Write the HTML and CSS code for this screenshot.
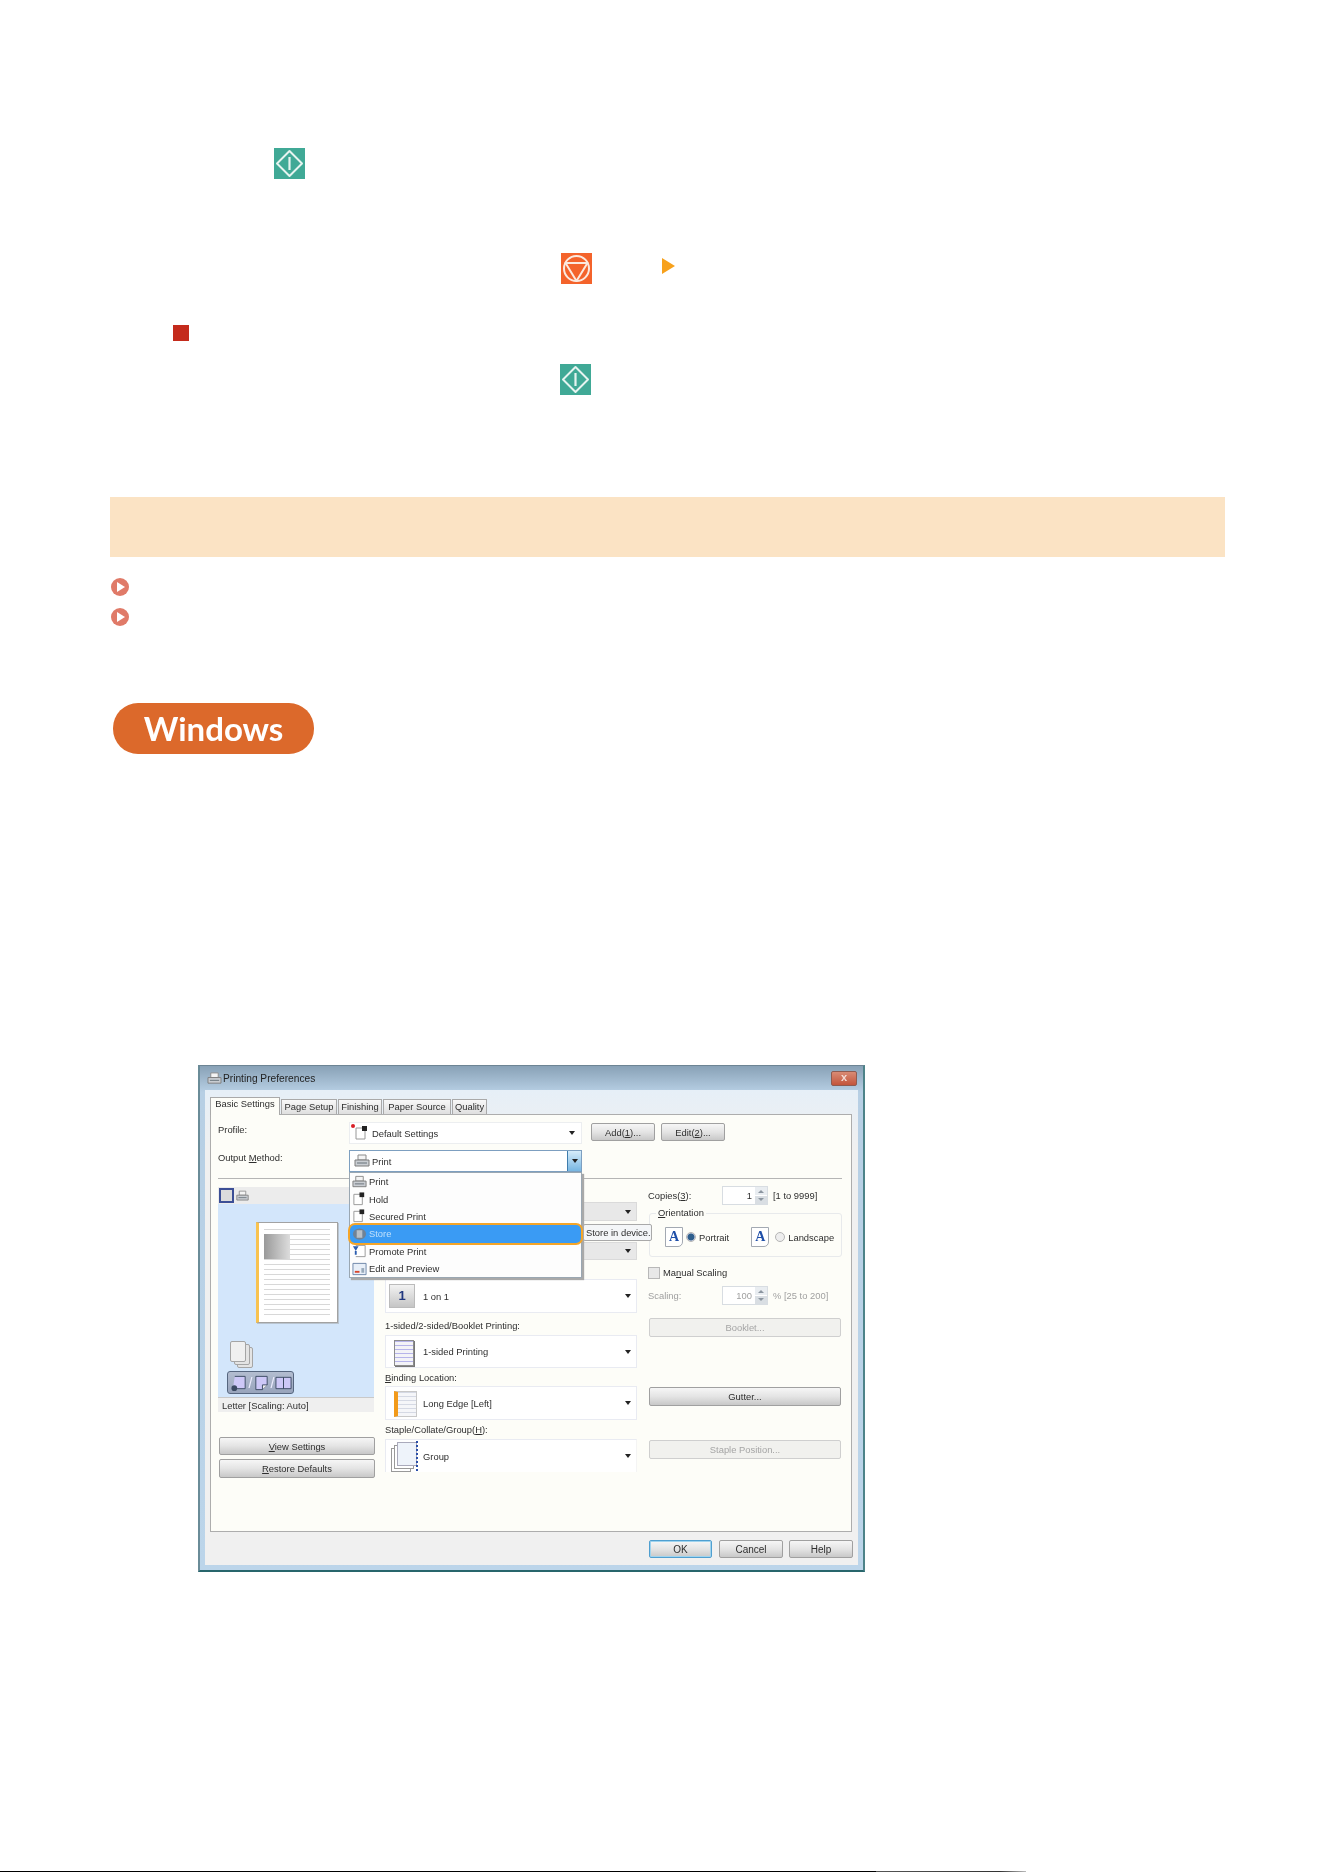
FILE: index.html
```html
<!DOCTYPE html>
<html lang="en">
<head>
    <meta charset="UTF-8">
    <meta name="viewport" content="width=device-width, initial-scale=1.0">
    <title>Printing Preferences</title>
    <link rel="stylesheet" href="styles.css">
</head>
<body>
    <svg class="defs" width="0" height="0">
        <symbol id="key-start" viewBox="0 0 31 31">
            <rect width="31" height="31" fill="#40a996"/>
            <path d="M15.5 3 L28 15.5 L15.5 28 L3 15.5 Z" fill="none" stroke="#e6f4f0" stroke-width="2" stroke-linejoin="round"/>
            <path d="M15.5 9 V22" stroke="#e6f4f0" stroke-width="2.2"/>
        </symbol>
        <symbol id="key-stop" viewBox="0 0 31 31">
            <rect width="31" height="31" fill="#f4632b"/>
            <circle cx="15.5" cy="15.5" r="12.5" fill="none" stroke="#fbe9df" stroke-width="2"/>
            <path d="M4.5 10 H26.5 L15.5 28 Z" fill="none" stroke="#fbe9df" stroke-width="2" stroke-linejoin="round"/>
        </symbol>
        <symbol id="link-arrow" viewBox="0 0 18 18">
            <circle cx="9" cy="9" r="9" fill="#e07a68"/>
            <path d="M6 4 L14 9 L6 14 Z" fill="#fff"/>
        </symbol>
        <symbol id="ico-printer" viewBox="0 0 16 14">
            <path d="M4 1 H12 V6 H4 Z" fill="#f4f4f4" stroke="#8a8a8a"/>
            <path d="M1 6 H15 V12 H1 Z" fill="#c9cdd2" stroke="#7c7c7c"/>
            <path d="M3 9 H13" stroke="#667079"/>
        </symbol>
        <symbol id="ico-page" viewBox="0 0 16 14">
            <path d="M2 2 H11 V13 H2 Z" fill="#fff" stroke="#989898"/>
            <rect x="8" y="0" width="5" height="5" fill="#222"/>
        </symbol>
        <symbol id="ico-store" viewBox="0 0 16 14">
            <ellipse cx="8" cy="7" rx="7" ry="6" fill="#6f8296"/>
            <path d="M5 3 H11 V11 H5 Z" fill="#b9bfc6"/>
        </symbol>
        <symbol id="ico-promote" viewBox="0 0 16 14">
            <path d="M4 1 H14 V13 H4" fill="#fff" stroke="#989898"/>
            <path d="M1 2 H7 L4 7 Z M3 7 H5 V11 H3 Z" fill="#2a5db0"/>
        </symbol>
        <symbol id="ico-edit" viewBox="0 0 16 14">
            <path d="M1 1 H15 V13 H1 Z" fill="#e8eff8" stroke="#6b84a8"/>
            <path d="M3 9 H8 V11 H3 Z" fill="#d8452c"/>
            <path d="M10 6 H13 V11 H10 Z" fill="#9ab"/>
        </symbol>
        <symbol id="tray-portrait" viewBox="0 0 18 18">
            <path d="M4 2 H15 V15 H2" fill="#cdc8f7" stroke="#3b4a63"/>
            <circle cx="3.5" cy="14.5" r="3" fill="#3b4a63"/>
        </symbol>
        <symbol id="tray-fold" viewBox="0 0 18 18">
            <path d="M3 2 H15 V11 L10 16 H3 Z" fill="#cdc8f7" stroke="#3b4a63"/>
            <path d="M10 16 V11 H15" fill="#eee" stroke="#3b4a63"/>
        </symbol>
        <symbol id="tray-book" viewBox="0 0 18 18">
            <path d="M1 3 H9 V15 H1 Z M9 3 H17 V15 H9 Z" fill="#cdc8f7" stroke="#3b4a63"/>
        </symbol>
    </svg>

    <div class="doc">
        <div class="key-row key-row-first">
            <svg class="key"><use href="#key-start"/></svg>
        </div>
        <div class="key-row key-row-stop">
            <svg class="key"><use href="#key-stop"/></svg>
            <span class="tri"></span>
        </div>
        <div class="red-mark"></div>
        <div class="key-row key-row-again">
            <svg class="key"><use href="#key-start"/></svg>
        </div>

        <div class="banner"></div>

        <ul class="links">
            <li><svg class="link-ico"><use href="#link-arrow"/></svg></li>
            <li><svg class="link-ico"><use href="#link-arrow"/></svg></li>
        </ul>

        <div class="pill">Windows</div>

        <div class="win">
            <div class="win-title">
                <svg class="win-ico"><use href="#ico-printer"/></svg>
                <span class="win-name">Printing Preferences</span>
                <span class="win-close">x</span>
            </div>
            <div class="client">
                <div class="tabs">
                    <span class="tab tab-on">Basic Settings</span>
                    <span class="tab tab-page">Page Setup</span>
                    <span class="tab tab-finish">Finishing</span>
                    <span class="tab tab-source">Paper Source</span>
                    <span class="tab tab-quality">Quality</span>
                </div>

                <div class="panel">
                    <div class="top-row">
                        <span class="top-label">Profile:</span>
                        <div class="combo combo-plain">
                            <i class="star"></i>
                            <svg class="combo-ico"><use href="#ico-page"/></svg>
                            <span>Default Settings</span>
                            <b class="arrow"></b>
                        </div>
                        <button class="btn btn-top">Add(<u>1</u>)...</button>
                        <button class="btn btn-top">Edit(<u>2</u>)...</button>
                    </div>
                    <div class="top-row">
                        <span class="top-label">Output <u>M</u>ethod:</span>
                        <div class="combo combo-open">
                            <svg class="combo-ico"><use href="#ico-printer"/></svg>
                            <span>Print</span>
                            <b class="combo-drop"><b class="arrow"></b></b>
                        </div>
                    </div>
                    <hr class="rule">

                    <div class="cols">
                        <div class="col-left">
                            <div class="view-bar">
                                <span class="view-page"></span>
                                <svg class="view-printer"><use href="#ico-printer"/></svg>
                            </div>
                            <div class="preview">
                                <div class="paper">
                                    <div class="paper-pic"></div>
                                </div>
                                <div class="stack">
                                    <i></i><i></i><i></i>
                                </div>
                                <div class="tray">
                                    <svg><use href="#tray-portrait"/></svg>
                                    <em>/</em>
                                    <svg><use href="#tray-fold"/></svg>
                                    <em>/</em>
                                    <svg><use href="#tray-book"/></svg>
                                </div>
                            </div>
                            <div class="status">Letter [Scaling: Auto]</div>
                            <button class="btn btn-wide btn-view"><u>V</u>iew Settings</button>
                            <button class="btn btn-wide btn-restore"><u>R</u>estore Defaults</button>
                        </div>

                        <div class="col-mid">
                            <div class="sel sel-hidden sel-a"><b class="arrow"></b></div>
                            <div class="sel sel-hidden sel-b"><b class="arrow"></b></div>
                            <div class="sel sel-tall sel-layout">
                                <span class="tile tile-layout">1</span>
                                <span>1 on 1</span>
                                <b class="arrow"></b>
                            </div>
                            <div class="mid-label mid-label-sided">1-sided/2-sided/Booklet Printing:</div>
                            <div class="sel sel-tall sel-sided">
                                <span class="tile tile-sided"></span>
                                <span>1-sided Printing</span>
                                <b class="arrow"></b>
                            </div>
                            <div class="mid-label mid-label-bind"><u>B</u>inding Location:</div>
                            <div class="sel sel-tall">
                                <span class="tile tile-bind"></span>
                                <span>Long Edge [Left]</span>
                                <b class="arrow"></b>
                            </div>
                            <div class="mid-label mid-label-staple">Staple/Collate/Group(<u>H</u>):</div>
                            <div class="sel sel-tall sel-last">
                                <span class="tile tile-group"></span>
                                <span>Group</span>
                                <b class="arrow"></b>
                            </div>
                        </div>

                        <div class="col-right">
                            <div class="spin-row">
                                <span class="spin-label">Copies(<u>3</u>):</span>
                                <div class="spin"><span class="spin-val">1</span><span class="spin-btns"></span></div>
                                <span class="spin-note">[1 to 9999]</span>
                            </div>
                            <div class="orient">
                                <span class="orient-legend"><u>O</u>rientation</span>
                                <span class="orient-ico">A</span>
                                <i class="radio radio-on"></i>
                                <span class="orient-text">Portrait</span>
                                <span class="orient-ico orient-ico-land">A</span>
                                <i class="radio"></i>
                                <span class="orient-text">Landscape</span>
                            </div>
                            <div class="check-row">
                                <i class="check"></i>
                                <span>Ma<u>n</u>ual Scaling</span>
                            </div>
                            <div class="spin-row spin-row-off">
                                <span class="spin-label">Scaling:</span>
                                <div class="spin"><span class="spin-val">100</span><span class="spin-btns"></span></div>
                                <span class="spin-note">% [25 to 200]</span>
                            </div>
                            <button class="btn btn-side btn-off btn-booklet">Booklet...</button>
                            <button class="btn btn-side btn-gutter">Gutter...</button>
                            <button class="btn btn-side btn-off btn-staple">Staple Position...</button>
                        </div>
                    </div>

                    <div class="dropdown">
                        <div class="drop-item"><svg class="drop-ico"><use href="#ico-printer"/></svg>Print</div>
                        <div class="drop-item"><svg class="drop-ico"><use href="#ico-page"/></svg>Hold</div>
                        <div class="drop-item"><svg class="drop-ico"><use href="#ico-page"/></svg>Secured Print</div>
                        <div class="drop-item drop-item-on"><svg class="drop-ico"><use href="#ico-store"/></svg>Store</div>
                        <div class="drop-item"><svg class="drop-ico"><use href="#ico-promote"/></svg>Promote Print</div>
                        <div class="drop-item"><svg class="drop-ico"><use href="#ico-edit"/></svg>Edit and Preview</div>
                    </div>
                    <div class="tooltip">Store in device.</div>
                </div>

                <div class="win-foot">
                    <button class="btn btn-foot btn-ok">OK</button>
                    <button class="btn btn-foot">Cancel</button>
                    <button class="btn btn-foot">Help</button>
                </div>
            </div>
        </div>

        <div class="cut-line"></div>
    </div>
</body>
</html>
```

FILE: styles.css
```css
* { box-sizing: border-box; }
body {
    margin: 0;
    background: #fff;
    font-family: "Liberation Sans", Arial, sans-serif;
    color: #2e2e2e;
}
.defs { position: absolute; }
.doc {
    height: 1872px;
    overflow: hidden;
    padding-top: 148px;
}

/* keys that stand in the text */
.key-row { display: flex; align-items: center; height: 31px; }
.key { width: 31px; height: 31px; display: block; filter: blur(.35px); }
.key-row-first { padding-left: 274px; }
.key-row-stop { margin-top: 74px; padding-left: 561px; }
.key-row-again { margin-top: 23px; padding-left: 560px; }
.tri {
    margin-left: 70px;
    margin-top: -6px;
    width: 0;
    height: 0;
    border-left: 13px solid #f7a11c;
    border-top: 8px solid transparent;
    border-bottom: 8px solid transparent;
}
.red-mark {
    width: 16px;
    height: 16px;
    margin: 41px 0 0 173px;
    background: #c42b1c;
}

.banner {
    height: 60px;
    margin: 102px 99px 0 110px;
    background: #fbe3c4;
}
.links { list-style: none; margin: 21px 0 0 111px; padding: 0; }
.links li { height: 18px; margin-bottom: 12px; }
.links li:last-child { margin-bottom: 0; }
.link-ico { width: 18px; height: 18px; display: block; }

.pill {
    width: 201px;
    height: 51px;
    margin: 77px 0 0 113px;
    border-radius: 25px;
    background: #dc692b;
    color: #fff;
    font-family: Lato, sans-serif;
    font-weight: 700;
    font-size: 33px;
    line-height: 50px;
    text-align: center;
    filter: blur(.35px);
}

/* dialog */
.win {
    width: 667px;
    height: 507px;
    margin: 311px 0 0 198px;
    display: flex;
    flex-direction: column;
    background: linear-gradient(#88a1b6, #b7cfe4 26px, #bcd5ea);
    border-top: 1px solid #6d8494;
    border-left: 2px solid #6a8c98;
    border-right: 2px solid #4d8389;
    border-bottom: 2px solid #28666c;
    font-size: 9.4px;
    filter: blur(.5px);
}
.win-title {
    height: 24px;
    display: flex;
    align-items: center;
    padding: 0 6px 0 7px;
    flex: none;
}
.win-ico { width: 15px; height: 13px; }
.win-name { margin-left: 1px; color: #222; font-size: 10.2px; }
.win-close {
    margin-left: auto;
    width: 26px;
    height: 15px;
    border-radius: 2px;
    background: linear-gradient(#d98b74, #c3553c);
    border: 1px solid #8f5b50;
    color: #f3dcd6;
    font-weight: bold;
    font-size: 11px;
    line-height: 11px;
    text-align: center;
}
.client {
    flex: 1;
    margin: 0 5px 5px;
    padding: 7px 6px 0 5px;
    background: linear-gradient(#e6eff7, #f0f0f0 60px);
}
.tabs { display: flex; height: 17px; align-items: flex-end; }
.tab {
    height: 15px;
    margin-right: 1px;
    border: 1px solid #a9a9a9;
    border-bottom: 0;
    background: linear-gradient(#f8f8f8, #dfdfdf);
    line-height: 14px;
    text-align: center;
}
.tab-on { width: 70px; height: 18px; margin-bottom: -1px; line-height: 12px; background: #fdfdf8; position: relative; z-index: 1; }
.tab-page { width: 56px; }
.tab-finish { width: 44px; }
.tab-source { width: 68px; }
.tab-quality { width: 35px; }

.panel {
    position: relative;
    height: 418px;
    padding: 7px 9px 0 7px;
    border: 1px solid #adadad;
    background: #fdfdf8;
}
.top-row { display: flex; align-items: flex-start; height: 22px; margin-bottom: 6px; }
.top-label { width: 131px; line-height: 16px; }
.combo {
    position: relative;
    width: 233px;
    height: 22px;
    display: flex;
    align-items: center;
    background: #fff;
}
.combo-plain { border: 1px solid #eceef0; }
.combo-open { border: 1px solid #7d9fc0; }
.combo-ico { width: 16px; height: 14px; margin: 0 2px 0 4px; }
.star {
    position: absolute;
    left: 1px;
    top: 1px;
    width: 4px;
    height: 4px;
    border-radius: 50%;
    background: #d81f26;
}
.arrow {
    position: absolute;
    right: 6px;
    top: 50%;
    margin-top: -2px;
    border-top: 4px solid #222;
    border-left: 3px solid transparent;
    border-right: 3px solid transparent;
}
.combo-drop {
    position: absolute;
    right: 0;
    top: 0;
    bottom: 0;
    width: 14px;
    background: linear-gradient(#d6ecfa, #77b6e2);
    border-left: 1px solid #3f7cac;
}
.combo-drop .arrow { right: 3px; }
.btn {
    display: block;
    padding: 0;
    border: 1px solid #a0a0a0;
    border-radius: 2px;
    background: linear-gradient(#f6f6f6, #e4e4e4 50%, #c8c8c8);
    font-family: inherit;
    font-size: 9.4px;
    color: #2e2e2e;
}
.btn-top { width: 64px; height: 18px; margin: 1px 0 0 9px; }
.btn-top + .btn-top { margin-left: 6px; }
.rule { margin: 1px 0 0; border: 0; border-top: 1px solid #b5b5b5; height: 1px; }

.cols { display: flex; gap: 11px; margin-top: 7px; }
.col-left { width: 156px; padding-top: 1px; }
.view-bar {
    height: 17px;
    display: flex;
    align-items: center;
    padding-left: 1px;
    background: #ececec;
}
.view-page {
    width: 15px;
    height: 15px;
    border: 2px solid #3c4f96;
    background: #dcdcdc;
}
.view-printer { width: 13px; height: 12px; margin-left: 2px; }
.preview {
    height: 193px;
    padding-top: 18px;
    background: #d3e6fb;
    overflow: hidden;
}
.paper {
    width: 82px;
    height: 101px;
    margin-left: 38px;
    padding: 6px 7px 0 5px;
    border: 1px solid #a2a2a2;
    border-left: 3px solid #f8c24f;
    background: #fff;
    box-shadow: 1px 1px 0 #b9c4cf;
}
.paper-pic {
    height: 88px;
    background: repeating-linear-gradient(#d8d8d8 0 1px, #fff 1px 5px);
}
.paper-pic::before {
    content: "";
    display: block;
    width: 26px;
    height: 25px;
    position: relative;
    top: 5px;
    background: linear-gradient(90deg, #999, #ddd);
}
.stack {
    position: relative;
    width: 23px;
    height: 27px;
    margin: 18px 0 0 12px;
}
.stack i {
    position: absolute;
    width: 16px;
    height: 21px;
    border: 1px solid #a5a5a5;
    border-radius: 2px;
    background: #e4e4e4;
}
.stack i:nth-child(1) { left: 7px; top: 6px; }
.stack i:nth-child(2) { left: 4px; top: 3px; }
.stack i:nth-child(3) { left: 0; top: 0; background: #f0f0f0; }
.tray {
    width: 67px;
    height: 23px;
    margin: 3px 0 0 9px;
    display: flex;
    align-items: center;
    padding-left: 3px;
    border: 1px solid #56667f;
    border-radius: 3px;
    background: linear-gradient(#b3bdd0, #98a4bc);
    color: #eef;
    font-size: 14px;
}
.tray svg { width: 17px; height: 18px; flex: none; }
.tray em { width: 5px; text-align: center; font-style: normal; }
.status {
    height: 15px;
    padding: 1px 0 0 4px;
    background: #efefef;
    border-top: 1px solid #c9c9c9;
    line-height: 14px;
}
.btn-wide { width: 156px; height: 18px; margin-left: 1px; }
.btn-view { margin-top: 25px; }
.btn-restore { margin-top: 4px; height: 19px; }

.col-mid { width: 252px; padding-top: 16px; }
.sel {
    position: relative;
    display: flex;
    align-items: center;
    border: 1px solid #e9ebf2;
    background: #fff;
}
.sel .arrow { right: 5px; }
.sel-hidden { background: #e8e8e8; border-color: #dadada; }
.sel-a { height: 19px; }
.sel-b { height: 18px; margin-top: 21px; }
.sel-tall { height: 34px; }
.sel-layout { margin-top: 19px; }
.sel-sided { height: 33px; }
.sel-last { height: 33px; border-bottom: 0; border-right-color: #f4f4f4; }
.tile {
    width: 26px;
    height: 24px;
    margin: 0 8px 0 3px;
    flex: none;
    position: relative;
}
.tile-layout {
    border: 1px solid #bbb;
    background: linear-gradient(#f2f2f2, #c5c5c5);
    color: #20377f;
    font-weight: bold;
    font-size: 13px;
    line-height: 22px;
    text-align: center;
}
.tile-sided::before {
    content: "";
    position: absolute;
    left: 5px;
    top: 0;
    width: 18px;
    height: 24px;
    border: 1px solid #8c8c8c;
    box-shadow: 1px 1px 0 #777;
    background: repeating-linear-gradient(#b6b4ea 0 1px, #f3f3f7 1px 4px);
}
.tile-bind::before {
    content: "";
    position: absolute;
    left: 5px;
    top: 0;
    width: 18px;
    height: 24px;
    border: 1px solid #c8c8c8;
    border-left: 4px solid #f29a1a;
    background: repeating-linear-gradient(#d5d9e4 0 1px, #f5f6f9 1px 4px);
}
.tile-group::before {
    content: "";
    position: absolute;
    left: 8px;
    top: -2px;
    width: 18px;
    height: 22px;
    border: 1px solid #aab;
    background: #eef3fa;
    box-shadow: -3px 3px 0 -1px #fff, -3px 3px 0 0 #999, -6px 6px 0 -1px #fff, -6px 6px 0 0 #999;
}
.tile-group::after {
    content: "";
    position: absolute;
    left: 27px;
    top: -3px;
    height: 30px;
    border-left: 2px dotted #2a4fa8;
}
.mid-label { line-height: 14px; }
.mid-label-sided { height: 22px; padding-top: 6px; }
.mid-label-bind { height: 18px; padding-top: 3px; }
.mid-label-staple { height: 19px; padding-top: 3px; }

.col-right { width: 194px; }
.spin-row { display: flex; align-items: center; height: 19px; }
.spin-label { width: 74px; }
.spin {
    width: 46px;
    height: 19px;
    display: flex;
    border: 1px solid #d8dde2;
    background: #fff;
}
.spin-val { flex: 1; text-align: right; padding-right: 3px; line-height: 17px; }
.spin-btns {
    position: relative;
    width: 12px;
    background: linear-gradient(#e9edf1 47%, #fff 47% 53%, #d9dee3 53%);
}
.spin-btns::before, .spin-btns::after {
    content: "";
    position: absolute;
    left: 3px;
    border-left: 3px solid transparent;
    border-right: 3px solid transparent;
}
.spin-btns::before { top: 3px; border-bottom: 3px solid #8b95a0; }
.spin-btns::after { bottom: 3px; border-top: 3px solid #8b95a0; }
.spin-note { margin-left: 5px; }
.spin-row-off { margin-top: 7px; color: #a0a0a0; }
.orient {
    position: relative;
    display: flex;
    align-items: center;
    width: 193px;
    height: 44px;
    margin: 8px 0 0 1px;
    padding: 4px 0 0 15px;
    border: 1px solid #e8eaec;
    border-radius: 3px;
}
.orient-legend {
    position: absolute;
    left: 6px;
    top: -7px;
    padding: 0 2px;
    background: #fdfdf8;
    line-height: 12px;
}
.orient-ico {
    width: 18px;
    height: 20px;
    margin-right: 3px;
    border: 1px solid #a3a9b2;
    border-bottom-right-radius: 5px;
    background: #fff;
    color: #1f4fa8;
    font-family: "Liberation Serif", serif;
    font-weight: bold;
    font-size: 14px;
    line-height: 18px;
    text-align: center;
}
.orient-ico-land { margin: 0 6px 0 22px; }
.radio {
    width: 10px;
    height: 10px;
    margin-right: 3px;
    border-radius: 50%;
    border: 1px solid #b5b5b5;
    background: #eee;
}
.radio-on { background: radial-gradient(#2e5e8c 0 3px, #dde 4px); }
.check-row {
    display: flex;
    align-items: center;
    height: 13px;
    margin-top: 9px;
}
.check {
    width: 12px;
    height: 12px;
    margin-right: 3px;
    border: 1px solid #b8b8b8;
    background: #e8e8e8;
}
.btn-side { width: 192px; height: 19px; margin-left: 1px; }
.btn-off {
    background: #f1f1ee;
    border-color: #cfcfcf;
    color: #a5a5a5;
}
.btn-booklet { margin-top: 13px; }
.btn-gutter { margin-top: 50px; }
.btn-staple { margin-top: 34px; }

.dropdown {
    position: absolute;
    left: 138px;
    top: 57px;
    width: 233px;
    height: 106px;
    background: #fdfdfd;
    border: 1px solid #9aa7b2;
    box-shadow: 2px 2px 1px #a9a9a9;
    z-index: 2;
}
.drop-item {
    position: relative;
    height: 17.4px;
    display: flex;
    align-items: center;
    padding-left: 2px;
}
.drop-ico { width: 15px; height: 14px; margin-right: 2px; }
.drop-item-on {
    background: #3a9bf4;
    border-radius: 5px;
    box-shadow: 0 0 0 2px #f5a528;
    color: #bfe0fb;
    z-index: 1;
}
.tooltip {
    position: absolute;
    left: 372px;
    top: 109px;
    width: 69px;
    height: 17px;
    background: #f4f6f8;
    border: 1px solid #a9a9a9;
    border-radius: 2px;
    line-height: 15px;
    padding-left: 2px;
    white-space: nowrap;
    z-index: 3;
}

.win-foot {
    display: flex;
    justify-content: flex-end;
    gap: 6px;
    padding-top: 8px;
    margin-right: -1px;
}
.btn-foot { width: 64px; height: 18px; font-size: 10px; }
.btn-ok {
    width: 63px;
    margin-right: 1px;
    border-color: #4f9fd0;
    box-shadow: inset 0 0 0 1px #9fd3ee;
}

.cut-line {
    height: 1px;
    width: 1026px;
    margin-top: 299px;
    background: linear-gradient(90deg, #000 876px, #555 876px, #333 1000px, #bbb 1026px);
}
```
